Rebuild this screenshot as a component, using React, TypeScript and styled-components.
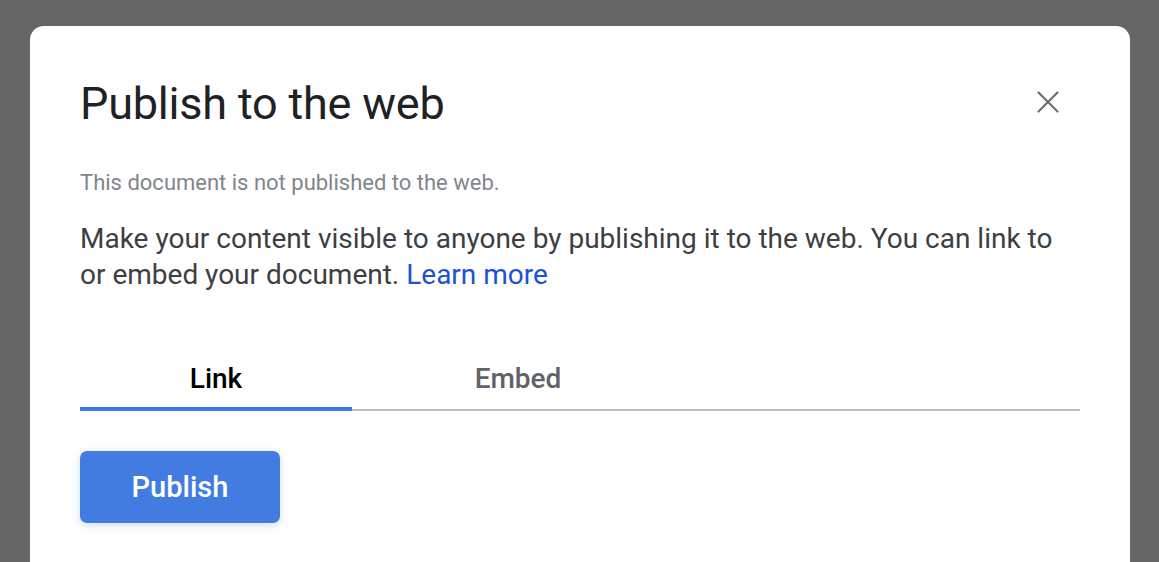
import { FC, useState } from 'react';
import styled, { createGlobalStyle } from 'styled-components';

const GlobalStyle = createGlobalStyle`
  html, body {
    margin: 0;
    padding: 0;
    background: #666666;
    height: 100%;
    overflow: hidden;
  }
  body {
    font-family: Roboto, 'Liberation Sans', Arial, sans-serif;
  }
`;

const Backdrop = styled.div`
  padding: 26px 29px 0 30px;
  min-height: 562px;
  box-sizing: border-box;
`;

const Dialog = styled.div`
  background: #ffffff;
  border-radius: 14px 14px 0 0;
  padding: 52px 50px 60px 50px;
  min-height: 560px;
  box-sizing: border-box;
`;

const Header = styled.div`
  display: flex;
  align-items: flex-start;
  justify-content: space-between;
`;

const Title = styled.h1`
  margin: 0;
  font-family: Roboto, 'Liberation Sans', sans-serif;
  font-weight: 400;
  font-size: 45px;
  line-height: 52px;
  color: #202124;
  letter-spacing: -0.2px;
`;

const CloseButton = styled.button`
  width: 40px;
  height: 40px;
  margin: 4px 12px 0 0;
  border: none;
  background: transparent;
  display: flex;
  align-items: center;
  justify-content: center;
  cursor: pointer;
  padding: 0;
`;

const Status = styled.p`
  margin: 39px 0 0 0;
  font-size: 22px;
  line-height: 28px;
  color: #80868b;
`;

const Description = styled.p`
  margin: 24px 0 0 0;
  font-size: 28px;
  line-height: 36px;
  color: #3c4043;
`;

const LearnMore = styled.a`
  color: #1c52d2;
  text-decoration: none;
`;

const TabBar = styled.div`
  display: flex;
  margin-top: 68px;
  border-bottom: 2px solid #bdbdbd;
`;

const Tab = styled.button<{ $active: boolean; $width: number }>`
  width: ${(p) => p.$width}px;
  margin-bottom: -2px;
  padding: 2px 0 12px 0;
  border: none;
  border-bottom: 4px solid ${(p) => (p.$active ? '#3b78e7' : 'transparent')};
  background: transparent;
  font-family: Roboto, 'Liberation Sans', sans-serif;
  font-size: 28px;
  line-height: 32px;
  font-weight: 500;
  color: ${(p) => (p.$active ? '#000000' : '#5f6368')};
  cursor: pointer;
`;

const PublishButton = styled.button`
  margin-top: 40px;
  width: 200px;
  height: 72px;
  border: none;
  border-radius: 7px;
  background: #437ce1;
  color: #ffffff;
  font-family: Roboto, 'Liberation Sans', sans-serif;
  font-size: 29px;
  font-weight: 500;
  box-shadow: 0 2px 8px rgba(67, 124, 225, 0.25);
  cursor: pointer;
`;

const CloseIcon: FC = () => (
  <svg width="22" height="22" viewBox="0 0 22 22">
    <path d="M1.5 1.5 L20.5 20.5 M20.5 1.5 L1.5 20.5" stroke="#6f6f6f" strokeWidth="2.2" strokeLinecap="round" />
  </svg>
);

const tabs = [
  { key: 'link', label: 'Link', width: 272 },
  { key: 'embed', label: 'Embed', width: 332 },
];

const App: FC = () => {
  const [active, setActive] = useState('link');

  return (
    <>
      <GlobalStyle />
      <Backdrop>
        <Dialog>
          <Header>
            <Title>Publish to the web</Title>
            <CloseButton aria-label="Close">
              <CloseIcon />
            </CloseButton>
          </Header>
          <Status>This document is not published to the web.</Status>
          <Description>
            Make your content visible to anyone by publishing it to the web. You can link to or embed your
            document. <LearnMore href="#">Learn more</LearnMore>
          </Description>
          <TabBar>
            {tabs.map((t) => (
              <Tab key={t.key} $active={active === t.key} $width={t.width} onClick={() => setActive(t.key)}>
                {t.label}
              </Tab>
            ))}
          </TabBar>
          <PublishButton>Publish</PublishButton>
        </Dialog>
      </Backdrop>
    </>
  );
};

export default App;
